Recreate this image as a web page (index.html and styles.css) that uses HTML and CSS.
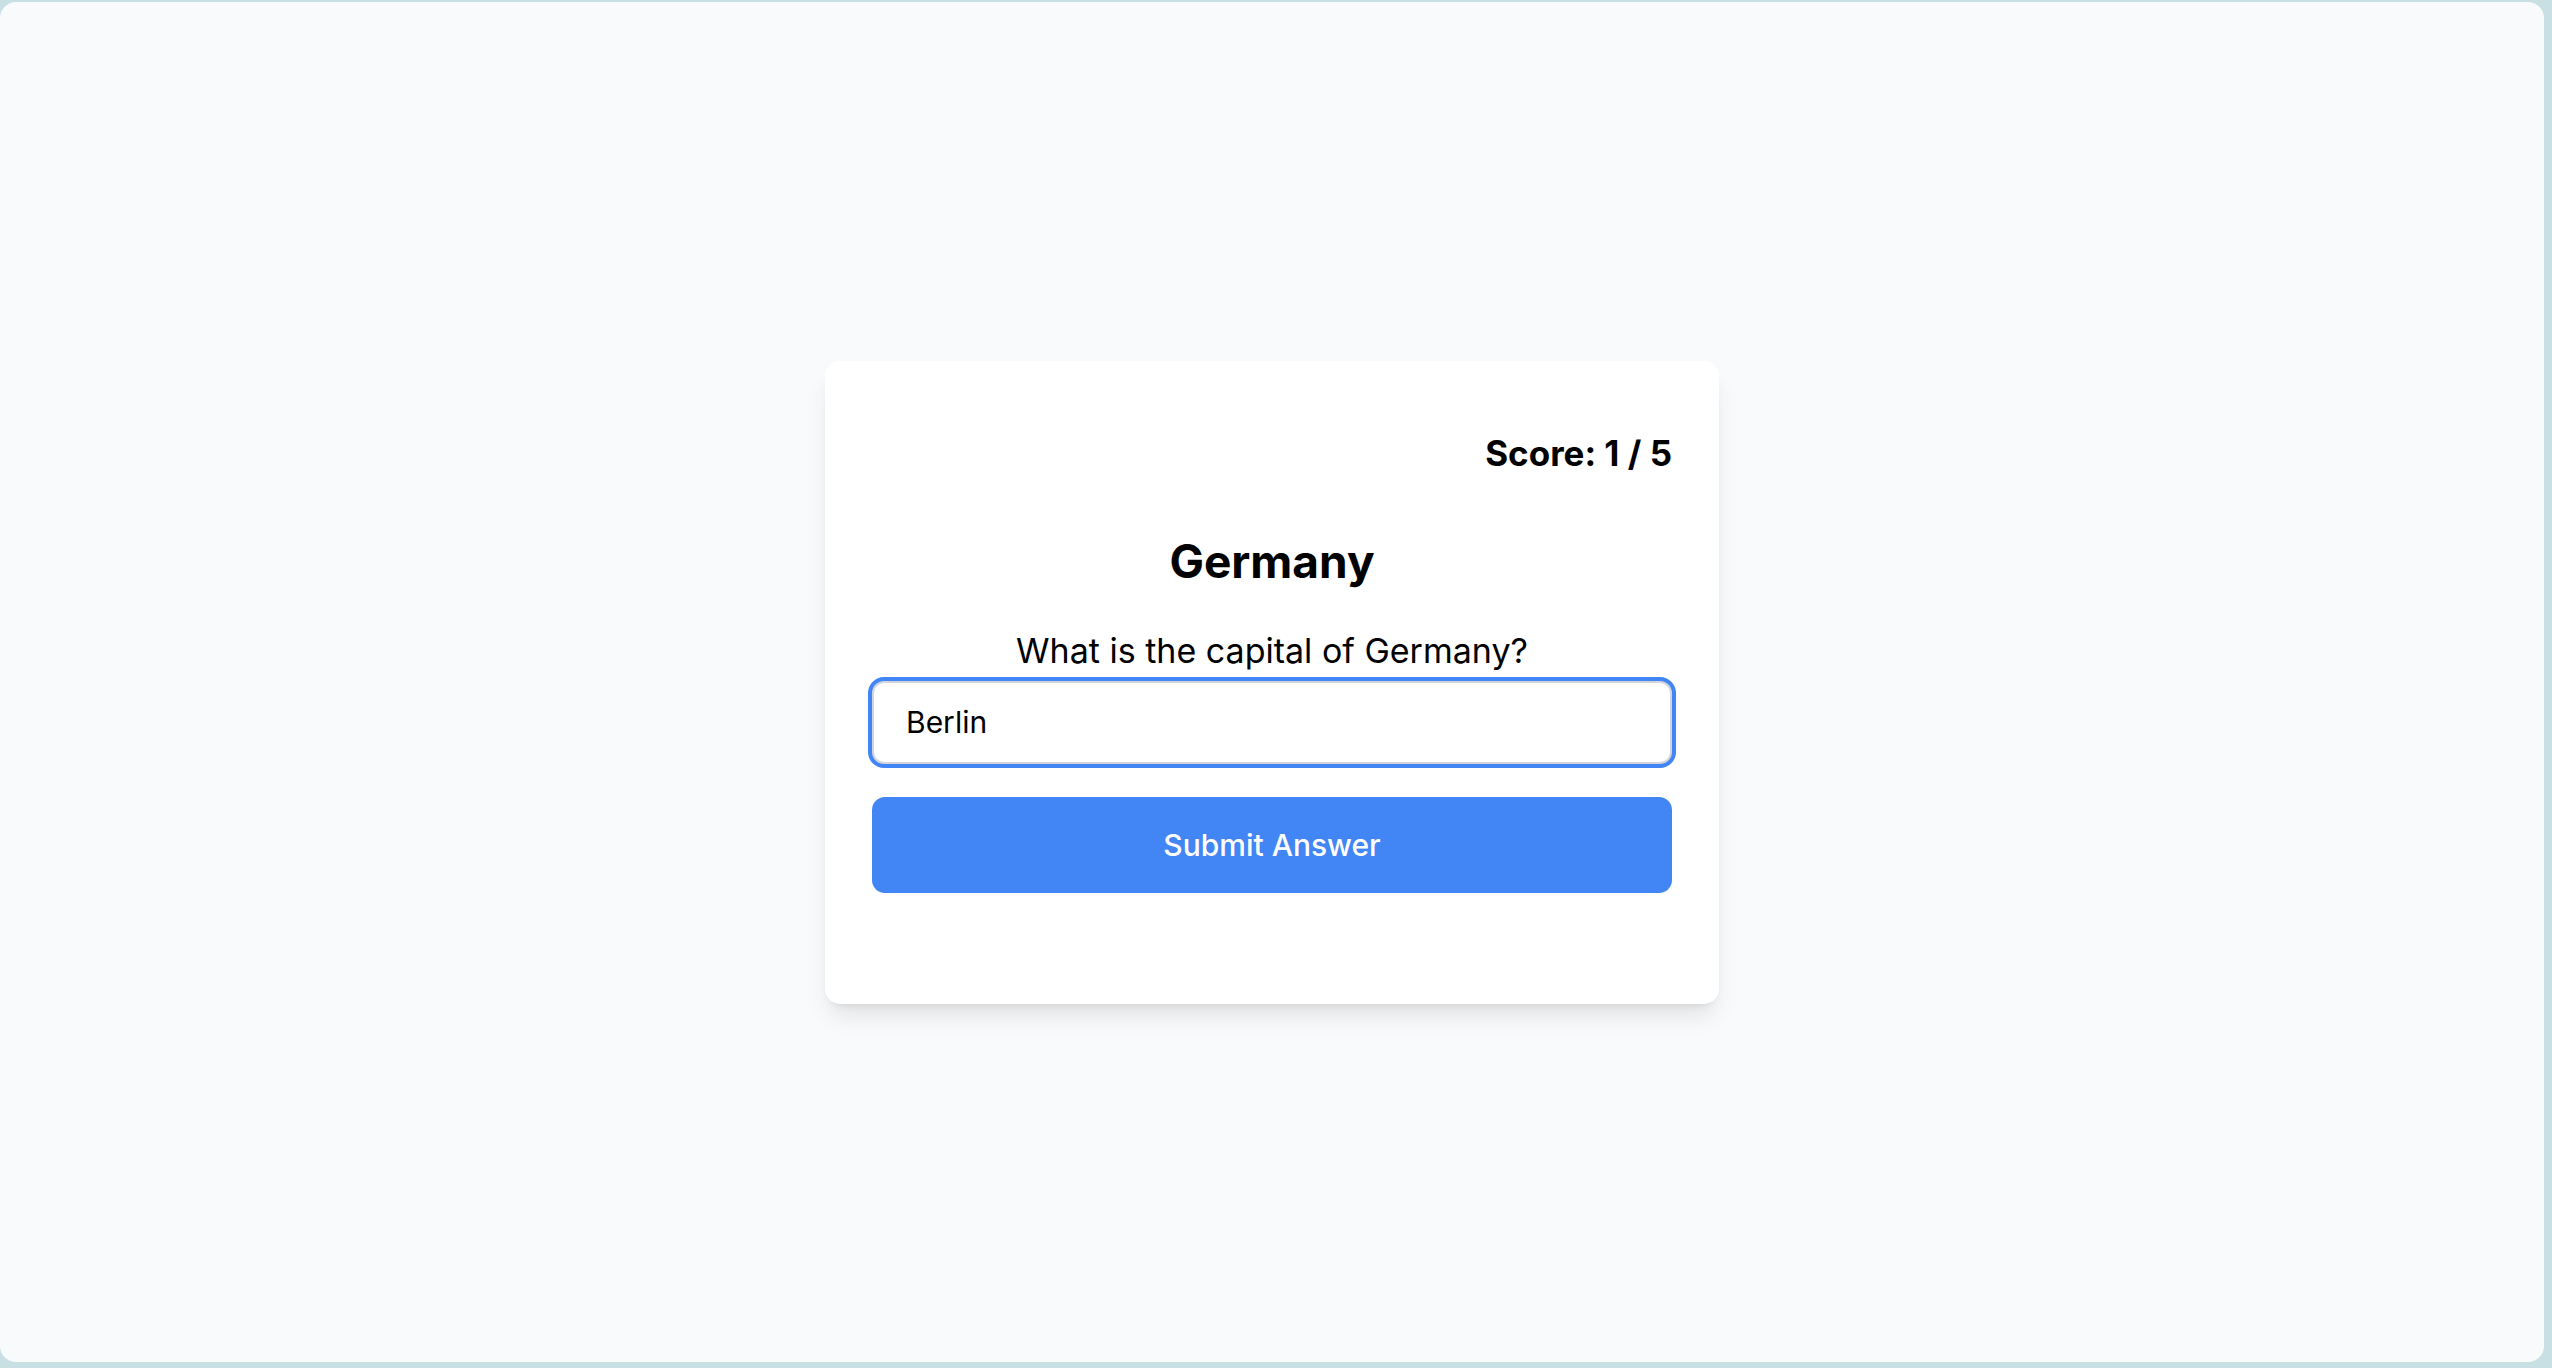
FILE: index.html
```html
<!DOCTYPE html>
<html lang="en">
<head>
<meta charset="utf-8">
<title>Capital Quiz</title>
<link rel="stylesheet" href="styles.css">
</head>
<body>
<div class="frame">
  <div class="card">
    <div class="score">Score: 1 / 5</div>
    <h2 class="country">Germany</h2>
    <p class="question">What is the capital of Germany?</p>
    <input class="answer" type="text" value="Berlin">
    <button class="submit" type="button">Submit Answer</button>
  </div>
</div>
</body>
</html>
```
FILE: styles.css
```css
html, body {
  margin: 0;
  padding: 0;
}
body {
  background: #c8dfe3;
  font-family: Inter, "Noto Sans", "Liberation Sans", sans-serif;
  color: #000;
  width: 2552px;
  height: 1368px;
  overflow: hidden;
}
.frame {
  box-sizing: border-box;
  width: 2544px;
  height: 1360px;
  margin-top: 2px;
  background: #f9fafb;
  border-radius: 16px;
  display: flex;
  align-items: center;
  justify-content: center;
}
.card {
  box-sizing: border-box;
  width: 894px;
  padding: 68px 47px 111px;
  background: #ffffff;
  border-radius: 15px;
  box-shadow: 0 16px 24px -5px rgba(0, 0, 0, 0.1), 0 6px 10px -6px rgba(0, 0, 0, 0.1);
  display: flex;
  flex-direction: column;
}
.score {
  text-align: right;
  font-size: 35px;
  line-height: 49px;
  font-weight: 700;
}
.country {
  margin: 55px 0 0;
  text-align: center;
  font-size: 46px;
  line-height: 56px;
  font-weight: 700;
}
.question {
  margin: 41px 0 0;
  text-align: center;
  font-size: 34px;
  line-height: 42px;
  font-weight: 400;
}
.answer {
  box-sizing: border-box;
  margin: 9px 0 0;
  width: 800px;
  height: 83px;
  padding: 0 32px;
  border: 2px solid #d1d5db;
  border-radius: 12px;
  box-shadow: 0 0 0 4px #4285f4;
  outline: none;
  font-family: inherit;
  font-size: 30px;
  color: #000;
  background: #fff;
}
.submit {
  box-sizing: border-box;
  margin: 33px 0 0;
  width: 800px;
  height: 96px;
  border: none;
  border-radius: 13px;
  background: #4285f4;
  color: #fff;
  font-family: inherit;
  font-size: 30px;
  font-weight: 500;
  cursor: pointer;
}
```
